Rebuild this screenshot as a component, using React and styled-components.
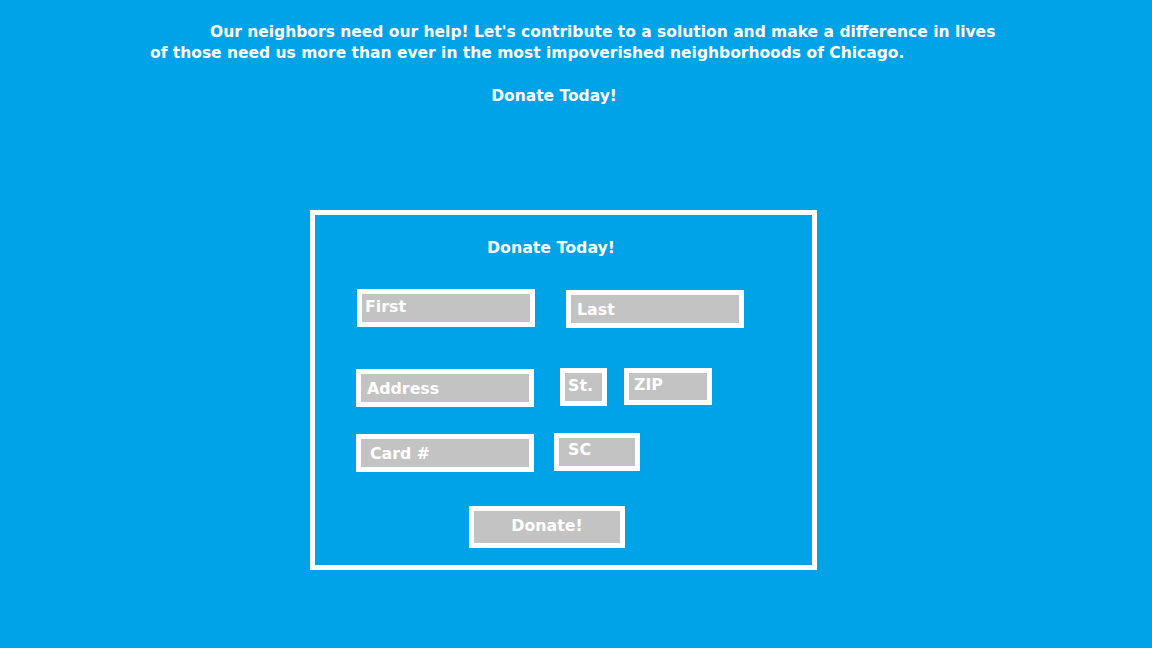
import React from 'react';
import styled, { createGlobalStyle } from 'styled-components';

const Global = createGlobalStyle`
  html, body {
    margin: 0;
    background: #00a3e8;
  }
  body {
    font-family: "DejaVu Sans", Verdana, sans-serif;
    font-weight: bold;
    color: #ffffff;
    width: 1152px;
    height: 648px;
    overflow: hidden;
  }
`;

const Header = styled.div`
  padding: 22px 0 0 150px;
  width: 808px;
  font-size: 15.5px;
  line-height: 21px;
`;

const Intro = styled.p`
  margin: 0;
  text-indent: 60px;
  white-space: nowrap;
`;

const Callout = styled.p`
  margin: 22px 0 0;
  text-align: center;
`;

const FormBox = styled.form`
  box-sizing: border-box;
  margin: 103px 0 0 310px;
  width: 507px;
  height: 360px;
  border: 5px solid #ffffff;
  padding: 22px 0 0 41px;
  display: flex;
  flex-direction: column;
`;

const Title = styled.h2`
  margin: 0 0 31px;
  padding-right: 66px;
  text-align: center;
  font-size: 15.8px;
  line-height: 21px;
  font-weight: bold;
`;

const Row = styled.div`
  display: flex;
  align-items: flex-start;
  gap: ${p => p.$gap || 20}px;
  margin-top: ${p => p.$top || 0}px;
  margin-left: ${p => p.$left || 0}px;
`;

const Field = styled.input`
  box-sizing: border-box;
  width: ${p => p.$w}px;
  height: ${p => p.$h || 38}px;
  margin-top: ${p => p.$dy || 0}px;
  margin-left: ${p => p.$shift || 0}px;
  border: 5px solid #ffffff;
  background: #c3c3c3;
  padding: 0 0 ${p => p.$lift || 0}px ${p => p.$pad || 5}px;
  font-family: "DejaVu Sans", Verdana, sans-serif;
  font-weight: bold;
  font-size: 15.8px;
  color: #ffffff;
  outline: none;
  &::placeholder {
    color: #ffffff;
    opacity: 1;
  }
`;

const Submit = styled.button`
  box-sizing: border-box;
  align-self: flex-start;
  margin: 34px 0 0 113px;
  width: 156px;
  height: 42px;
  border: 5px solid #ffffff;
  background: #c3c3c3;
  font-family: "DejaVu Sans", Verdana, sans-serif;
  font-weight: bold;
  font-size: 15.8px;
  color: #ffffff;
  padding: 0 0 3px;
  cursor: pointer;
`;

export default function App() {
  return (
    <>
      <Global />
      <Header>
        <Intro>
          Our neighbors need our help! Let's contribute to a solution and make a difference in lives
          <br />
          of those need us more than ever in the most impoverished neighborhoods of Chicago.
        </Intro>
        <Callout>Donate Today!</Callout>
      </Header>
      <FormBox onSubmit={e => e.preventDefault()}>
        <Title>Donate Today!</Title>
        <Row $gap={31} $left={1}>
          <Field $w={178} $pad={3} $lift={4} placeholder="First" />
          <Field $w={178} $dy={1} $pad={6} placeholder="Last" />
        </Row>
        <Row $gap={26} $top={40}>
          <Field $w={178} $dy={1} $pad={6} placeholder="Address" />
          <Field $w={47} $pad={3} $lift={4} placeholder="St." />
          <Field $w={88} $h={37} $shift={-9} $pad={5} $lift={4} placeholder="ZIP" />
        </Row>
        <Row $gap={20} $top={26}>
          <Field $w={178} $dy={1} $pad={9} placeholder="Card #" />
          <Field $w={86} $pad={9} $lift={6} placeholder="SC" />
        </Row>
        <Submit type="submit">Donate!</Submit>
      </FormBox>
    </>
  );
}
